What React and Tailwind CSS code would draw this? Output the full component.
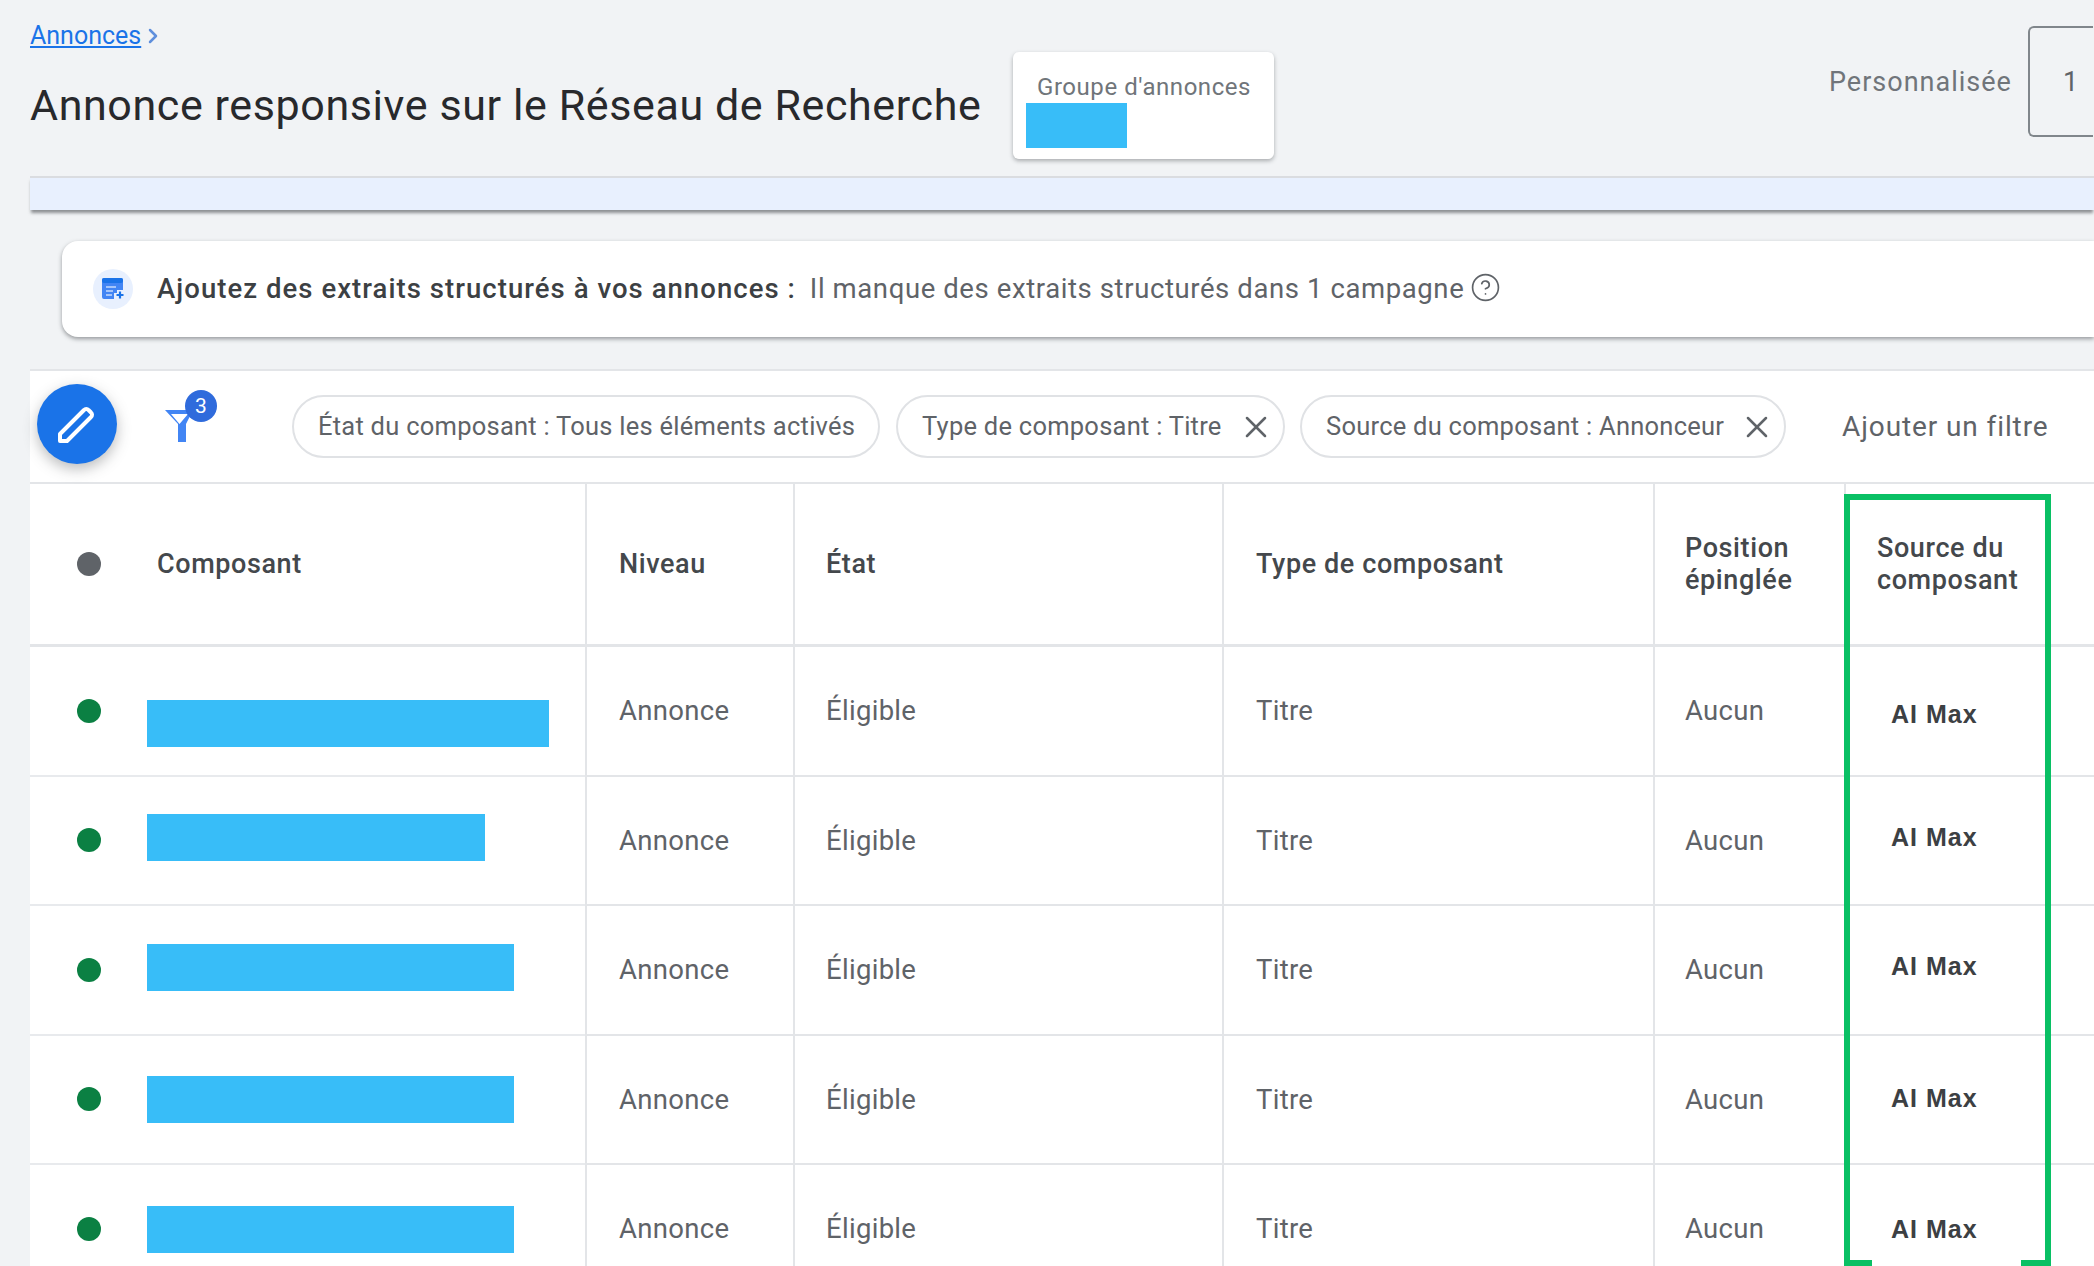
import { ChevronRight, CircleHelp, X } from "lucide-react"

const rows = [
  { bar: "w-[402px] mt-[26px]", ai: "mt-[7px]" },
  { bar: "w-[338px] mb-[5px]", ai: "mb-[6px]" },
  { bar: "w-[367px] mb-[4px]", ai: "mb-[6px]" },
  { bar: "w-[367px]", ai: "mb-[2px]" },
  { bar: "w-[367px] mt-[2px]", ai: "mt-[2px]" },
]

const headCell = "border-l-2 border-[#e3e5e8] flex items-center text-[27px] tracking-[0.6px] font-medium leading-[32px] text-[#44484c]"
const bodyCell = "border-l-2 border-[#e3e5e8] flex items-center text-[27.5px] tracking-[0.3px] text-[#5f6368]"

function Chip({ label, close, width }) {
  return (
    <div className={`h-[63px] shrink-0 rounded-full border-2 border-[#e0e2e5] pl-[24px] flex items-center justify-between pr-[9px] text-[25.5px] tracking-[0.25px] text-[#5f6368] ${width}`}>
      <span className="whitespace-nowrap">{label}</span>
      {close && <X className="w-[36px] h-[36px] text-[#5f6368]" strokeWidth={1.7} />}
    </div>
  )
}

function FilterIcon() {
  return (
    <svg width="60" height="60" viewBox="0 0 60 60" className="shrink-0 overflow-visible">
      <path d="M7 18h28L28 32v18h-8V32z M13 22l8.500 10 8.500-10z" fill="#4285f4" fillRule="evenodd" />
      <circle cx="43" cy="14" r="16" fill="#2f6bdc" />
      <text x="43" y="21" textAnchor="middle" fontSize="21" fill="#fff" fontFamily="Roboto, sans-serif">3</text>
    </svg>
  )
}

function ExtensionIcon() {
  return (
    <div className="w-[40px] h-[40px] rounded-full bg-[#e8f0fe] flex items-center justify-center">
      <svg width="24" height="24" viewBox="0 0 24 24">
        <path d="M3 1h17a2 2 0 0 1 2 2v10h-6v3h-3v6H3a2 2 0 0 1-2-2V3a2 2 0 0 1 2-2z" fill="#4285f4" />
        <rect x="1" y="1" width="21" height="5" rx="2" fill="#1a73e8" />
        <path d="M5 10h10M5 14h7M5 18h6" stroke="#c6dafc" strokeWidth="1.500" />
        <path d="M19 14.500v7M15.500 18h7" stroke="#1a73e8" strokeWidth="2.200" />
      </svg>
    </div>
  )
}

export default function App() {
  return (
    <div className="relative w-[2094px] h-[1266px] overflow-hidden bg-[#f1f3f5] pl-[30px] font-['Roboto',sans-serif]">
      <header className="h-[176px] flex">
        <div className="w-[983px] shrink-0 pt-[18px]">
          <div className="flex items-center h-[36px] text-[25px] text-[#1a73e8]">
            <span className="underline">Annonces</span>
            <ChevronRight className="w-[24px] h-[24px] text-[#5f8fdc]" strokeWidth={2.5} />
          </div>
          <h1 className="mt-[26px] text-[43px] tracking-[0.6px] leading-[50px] whitespace-nowrap text-[#28292c]">Annonce responsive sur le Réseau de Recherche</h1>
        </div>
        <div className="mt-[52px] h-[107px] w-[261px] shrink-0 rounded-[6px] bg-white shadow-[0_2px_4px_rgba(60,64,67,0.4)] pl-[13px] pt-[20px]">
          <div className="pl-[11px] text-[24px] tracking-[0.55px] leading-[31px] text-[#70757a] whitespace-nowrap">Groupe d'annonces</div>
          <div className="w-[101px] h-[45px] bg-[#38bdf8]"></div>
        </div>
        <div className="ml-[555px] mt-[64px] h-[36px] leading-[36px] text-[27px] tracking-[1px] text-[#70757a] whitespace-nowrap">Personnalisée</div>
        <div className="ml-[16px] mt-[26px] h-[111px] w-[65px] shrink-0 rounded-l-[6px] border-2 border-r-0 border-[#80868b] pt-[36px] pl-[33px] text-[27px] leading-[36px] text-[#5f6368]">1</div>
      </header>

      <div className="h-[34px] bg-[#e8f0fe] border-t-2 border-[#dadce0] shadow-[0_4px_3px_-1px_rgba(60,64,67,0.55)]"></div>

      <section className="mt-[31px] ml-[32px] h-[96px] rounded-l-[16px] bg-white shadow-[0_2px_4px_rgba(60,64,67,0.5)] pl-[31px] flex items-center text-[27.5px]">
        <ExtensionIcon />
        <span className="ml-[24px] font-medium tracking-[1.05px] text-[#3c4043] whitespace-nowrap">Ajoutez des extraits structurés à vos annonces :</span>
        <span className="ml-[14px] tracking-[0.6px] text-[#5f6368] whitespace-nowrap">Il manque des extraits structurés dans 1 campagne</span>
        <CircleHelp className="ml-[6px] mb-[3px] w-[31px] h-[31px] text-[#5f6368]" strokeWidth={1.3} />
      </section>

      <div className="mt-[32px] h-[115px] bg-white border-t-2 border-b-2 border-[#e3e5e8] flex items-center">
        <div className="ml-[7px] mb-[6px] w-[80px] h-[80px] shrink-0 rounded-full bg-[#1a73e8] shadow-[0_5px_14px_rgba(60,64,67,0.35)] flex items-center justify-center">
          <svg width="40" height="40" viewBox="0 0 40 40" fill="none">
            <path d="M3 37v-7L27 6a3 3 0 0 1 4.500 0l2.500 2.500a3 3 0 0 1 0 4.500L10 37z" stroke="#fff" strokeWidth="4" strokeLinejoin="round" />
          </svg>
        </div>
        <div className="ml-[41px] mb-[10px]"><FilterIcon /></div>
        <div className="ml-[74px] flex">
          <Chip label="État du composant : Tous les éléments activés" width="w-[588px]" />
          <div className="ml-[16px]"><Chip label="Type de composant : Titre" close width="w-[389px]" /></div>
          <div className="ml-[15px]"><Chip label="Source du composant : Annonceur" close width="w-[486px]" /></div>
        </div>
        <span className="ml-[56px] text-[28px] tracking-[0.9px] text-[#5f6368] whitespace-nowrap">Ajouter un filtre</span>
      </div>

      <div className="grid grid-cols-[555px_208px_429px_431px_191px_1fr] grid-rows-[163px] auto-rows-[129.500px] bg-white">
        <div className="flex items-center border-b-[3px] border-[#e3e5e8]">
          <span className="ml-[47px] w-[24px] h-[24px] rounded-full bg-[#5f6368]"></span>
          <span className="ml-[56px] text-[27px] tracking-[0.6px] font-medium text-[#44484c]">Composant</span>
        </div>
        <div className={`${headCell} border-b-[3px] pl-[32px]`}>Niveau</div>
        <div className={`${headCell} border-b-[3px] pl-[31px]`}>État</div>
        <div className={`${headCell} border-b-[3px] pl-[32px]`}>Type de composant</div>
        <div className={`${headCell} border-b-[3px] pl-[30px]`}>Position<br />épinglée</div>
        <div className={`${headCell} border-b-[3px] pl-[31px]`}>Source du<br />composant</div>

        {rows.map((row, i) => (
          <div key={i} className="contents">
            <div className="flex items-center border-b-2 border-[#e8eaed]">
              <span className="ml-[47px] w-[24px] h-[24px] shrink-0 rounded-full bg-[#0b8043]"></span>
              <span className={`ml-[46px] h-[47px] bg-[#38bdf8] ${row.bar}`}></span>
            </div>
            <div className={`${bodyCell} border-b-2 pl-[32px]`}>Annonce</div>
            <div className={`${bodyCell} border-b-2 pl-[31px]`}>Éligible</div>
            <div className={`${bodyCell} border-b-2 pl-[32px]`}>Titre</div>
            <div className={`${bodyCell} border-b-2 pl-[30px]`}>Aucun</div>
            <div className="border-l-2 border-b-2 border-[#e3e5e8] flex items-center pl-[45px]">
              <span className={`font-['Liberation_Sans',sans-serif] font-bold text-[25px] tracking-[1px] text-[#3c4043] ${row.ai}`}>AI Max</span>
            </div>
          </div>
        ))}
      </div>

      {/* green highlight drawn over the last column */}
      <div className="absolute left-[1844px] top-[494px] w-[207px] h-[772px] border-[6px] border-b-0 border-[#09c064]">
        <div className="absolute -left-[6px] bottom-0 w-[28px] h-[6px] bg-[#09c064]"></div>
        <div className="absolute -right-[6px] bottom-0 w-[30px] h-[6px] bg-[#09c064]"></div>
      </div>
    </div>
  )
}
